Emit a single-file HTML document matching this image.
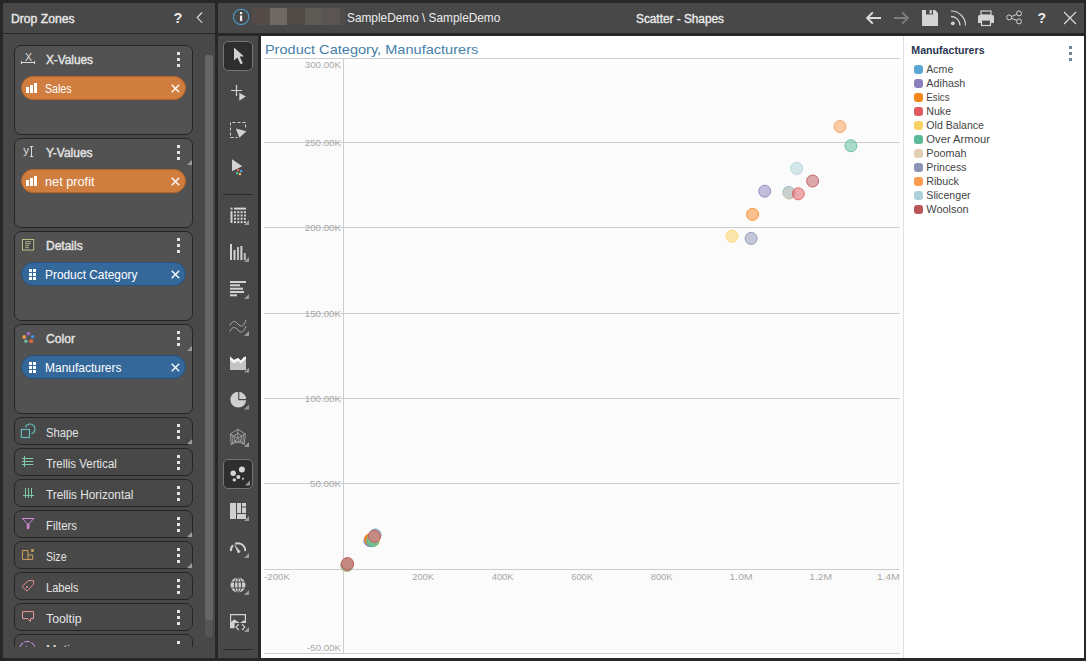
<!DOCTYPE html>
<html><head><meta charset="utf-8"><title>Scatter - Shapes</title>
<style>
*{box-sizing:border-box;margin:0;padding:0}
html,body{width:1086px;height:661px;overflow:hidden;background:#272727}
body{position:relative;font-family:"Liberation Sans","DejaVu Sans",sans-serif;font-size:13px;color:#e6e6e6}
.abs{position:absolute}
#lhead{left:3px;top:3px;width:212px;height:30px;background:#484848}
#lbody{left:3px;top:34px;width:212px;height:624px;background:#484848;overflow:hidden}
#lclip{left:0;top:0;width:200px;height:613px;overflow:hidden}
#mhead{left:218px;top:3px;width:866px;height:30px;background:#484848}
#tbar{left:218px;top:36px;width:40px;height:622px;background:#484848}
#chart{left:261px;top:36px;width:823px;height:622px;background:#fff}
.t{position:absolute;white-space:nowrap;line-height:16px;transform-origin:0 0;font-size:12px}
.zone{position:absolute;left:11px;width:179px;border:1px solid #252525;border-radius:7px;background:#484848}
.zone.open{background:#525252;height:90px}
.zone.closed{height:28px}
.zt{position:absolute;left:31px;top:6.5px;font-size:12px;color:#e4e4e4;white-space:nowrap;line-height:16px;transform-origin:0 0}
.open .zt{top:5.7px;-webkit-text-stroke:0.4px #e4e4e4}
.dots{position:absolute;left:162px;top:6px;width:3px;height:3px;background:#e4e4e4;box-shadow:0 6px 0 #e4e4e4,0 12px 0 #e4e4e4}
.pill{position:absolute;left:6px;top:30px;width:165px;height:24px;border-radius:12px;border:1px solid #b86427;background:#d07e40}
.pill.blue{background:#34689a;border-color:#27507a}
.pill .pt{position:absolute;left:22.7px;top:3.5px;font-size:12px;color:#fff;white-space:nowrap;line-height:16px;transform-origin:0 0}
.zi{position:absolute;left:4px;top:3px}
.ax{font-size:9.9px;fill:#a8a8a8}
.lg{font-size:10.5px;fill:#444}
.corner{position:absolute;right:0;top:21px;width:0;height:0;border-left:5px solid transparent;border-bottom:5px solid #9c9c9c}
</style></head><body>
<div id="lhead" class="abs">
  <div class="t" id="dz" style="left:7.5px;top:7.8px;-webkit-text-stroke:0.4px #e6e6e6;transform:scaleX(1.0127)">Drop Zones</div>
  <div class="t" style="left:170.5px;top:7.2px;font-weight:bold;font-size:14.5px;color:#ededed">?</div>
  <svg class="abs" style="left:193px;top:9.2px" width="8" height="12" viewBox="0 0 8 12"><path d="M6.1 0.5L1.2 5.6L6.1 10.7" fill="none" stroke="#e0e0e0" stroke-width="1.1"/></svg>
</div>
<div id="lbody" class="abs"><div id="lclip" class="abs">
<div class="zone open" style="top:11px"><svg class="zi" width="20" height="20" viewBox="0 0 20 20"><text x="9.5" y="12" font-size="10.5" text-anchor="middle" fill="#dcdcdc" font-family="Liberation Sans,sans-serif">X</text><path d="M2.5 13.5H15.5M2.5 12V15M15.5 12V15" stroke="#dcdcdc" stroke-width="1" fill="none"/></svg><div class="zt" style="transform:scaleX(0.9830)">X-Values</div><div class="dots"></div><div class="pill"><svg class="abs" style="left:4px;top:6px" width="11" height="10" viewBox="0 0 11 10"><path d="M0 4H3V10H0ZM4 2H7V10H4ZM8 0H11V10H8Z" fill="#fff"/></svg><div class="pt" style="transform:scaleX(0.8857)">Sales</div><svg class="abs" style="left:148.6px;top:6.7px" width="9" height="9" viewBox="0 0 9 9"><path d="M0.7 0.7L8.2 8.2M8.2 0.7L0.7 8.2" stroke="#fff" stroke-width="1.3" fill="none"/></svg></div></div>
<div class="zone open" style="top:104px"><svg class="zi" width="20" height="20" viewBox="0 0 20 20"><text x="7" y="11.6" font-size="11.5" text-anchor="middle" fill="#dcdcdc" font-family="Liberation Sans,sans-serif">y</text><path d="M12.5 4.5V14.5M11 4.5H14.2M11 14.5H14.2" stroke="#dcdcdc" stroke-width="1" fill="none"/></svg><div class="zt" style="transform:scaleX(0.9957)">Y-Values</div><div class="dots"></div><div class="pill"><svg class="abs" style="left:4px;top:6px" width="11" height="10" viewBox="0 0 11 10"><path d="M0 4H3V10H0ZM4 2H7V10H4ZM8 0H11V10H8Z" fill="#fff"/></svg><div class="pt" style="transform:scaleX(1.0599)">net profit</div><svg class="abs" style="left:148.6px;top:6.7px" width="9" height="9" viewBox="0 0 9 9"><path d="M0.7 0.7L8.2 8.2M8.2 0.7L0.7 8.2" stroke="#fff" stroke-width="1.3" fill="none"/></svg></div><div class="corner"></div></div>
<div class="zone open" style="top:197px"><svg class="zi" width="20" height="20" viewBox="0 0 20 20"><rect x="3.5" y="4.5" width="11.2" height="10.5" fill="#45454c" stroke="#bcc088" stroke-width="1"/><path d="M6 6.7H12M6 8.7H12M6 10.7H10M6 12.7H10" stroke="#bcc088" stroke-width="0.9"/></svg><div class="zt" style="transform:scaleX(1.0003)">Details</div><div class="dots"></div><div class="pill blue"><svg class="abs" style="left:6.7px;top:5.7px" width="7" height="11" viewBox="0 0 7 11"><path d="M0 0H3V3H0ZM4 0H7V3H4ZM0 4H3V7H0ZM4 4H7V7H4ZM0 8H3V11H0ZM4 8H7V11H4Z" fill="#fff"/></svg><div class="pt" style="transform:scaleX(0.9905)">Product Category</div><svg class="abs" style="left:148.6px;top:6.7px" width="9" height="9" viewBox="0 0 9 9"><path d="M0.7 0.7L8.2 8.2M8.2 0.7L0.7 8.2" stroke="#fff" stroke-width="1.3" fill="none"/></svg></div></div>
<div class="zone open" style="top:290px"><svg class="zi" width="20" height="20" viewBox="0 0 20 20"><circle cx="9.4" cy="5.6" r="1.8" fill="#a666c8"/><circle cx="5.2" cy="8.9" r="1.9" fill="#ee9a4a"/><circle cx="13.6" cy="8.8" r="1.8" fill="#4a88d4"/><circle cx="6.9" cy="13.2" r="1.8" fill="#78b89c"/><circle cx="12.2" cy="13.2" r="1.9" fill="#e86a3c"/></svg><div class="zt" style="transform:scaleX(1.0109)">Color</div><div class="dots"></div><div class="pill blue"><svg class="abs" style="left:6.7px;top:5.7px" width="7" height="11" viewBox="0 0 7 11"><path d="M0 0H3V3H0ZM4 0H7V3H4ZM0 4H3V7H0ZM4 4H7V7H4ZM0 8H3V11H0ZM4 8H7V11H4Z" fill="#fff"/></svg><div class="pt" style="transform:scaleX(0.9974)">Manufacturers</div><svg class="abs" style="left:148.6px;top:6.7px" width="9" height="9" viewBox="0 0 9 9"><path d="M0.7 0.7L8.2 8.2M8.2 0.7L0.7 8.2" stroke="#fff" stroke-width="1.3" fill="none"/></svg></div><div class="corner"></div></div>
<div class="zone closed" style="top:383px"><svg class="zi" width="20" height="20" viewBox="0 0 20 20"><rect x="2.4" y="8.5" width="8.1" height="8" fill="none" stroke="#62babd" stroke-width="1.2"/><path d="M6.3 6.4A5 5 0 1 1 12.5 12.8" fill="none" stroke="#62babd" stroke-width="1.2"/></svg><div class="zt" style="transform:scaleX(0.9336)">Shape</div><div class="dots"></div><div class="corner"></div></div>
<div class="zone closed" style="top:414px"><svg class="zi" width="20" height="20" viewBox="0 0 20 20"><path d="M3 6.5H14.3M3 9.5H14.3M3 12.5H14.3M5.5 4V15" stroke="#7fc8a8" stroke-width="1" fill="none"/></svg><div class="zt" style="transform:scaleX(0.9535)">Trellis Vertical</div><div class="dots"></div></div>
<div class="zone closed" style="top:445px"><svg class="zi" width="20" height="20" viewBox="0 0 20 20"><path d="M6.5 5V15M9.5 5V15M12.5 5V15M4 12.5H15" stroke="#7fc8a8" stroke-width="1" fill="none"/></svg><div class="zt" style="transform:scaleX(0.9829)">Trellis Horizontal</div><div class="dots"></div></div>
<div class="zone closed" style="top:476px"><svg class="zi" width="20" height="20" viewBox="0 0 20 20"><path d="M3.4 4.5H14.8L9.9 9.7V14.6H8.3V9.7Z" fill="none" stroke="#d88ad8" stroke-width="1"/><rect x="8.3" y="9.7" width="1.6" height="4.9" fill="#d88ad8"/></svg><div class="zt" style="transform:scaleX(0.9488)">Filters</div><div class="dots"></div><div class="corner"></div></div>
<div class="zone closed" style="top:507px"><svg class="zi" width="20" height="20" viewBox="0 0 20 20"><path d="M3.5 5.5H9V10H13.7V14.4H3.5Z M9 10V14.4" fill="none" stroke="#cda35c" stroke-width="1"/><rect x="12.6" y="4.6" width="1.8" height="1.8" fill="none" stroke="#cda35c" stroke-width="0.9"/></svg><div class="zt" style="transform:scaleX(0.8782)">Size</div><div class="dots"></div><div class="corner"></div></div>
<div class="zone closed" style="top:538px"><svg class="zi" width="20" height="20" viewBox="0 0 20 20"><path d="M3 10.5L9.4 4.6H14.6V8.2L8 15.2Z" fill="none" stroke="#e48e8e" stroke-width="1"/><circle cx="7.9" cy="10.9" r="1" fill="#e48e8e"/></svg><div class="zt" style="transform:scaleX(0.9187)">Labels</div><div class="dots"></div></div>
<div class="zone closed" style="top:569px"><svg class="zi" width="20" height="20" viewBox="0 0 20 20"><path d="M3.6 4.6H14.6V11.6H11.7L11.3 14.5L8.8 11.6H3.6Z" fill="none" stroke="#ec9c9c" stroke-width="1"/></svg><div class="zt" style="transform:scaleX(1.0234)">Tooltip</div><div class="dots"></div></div>
<div class="zone closed" style="top:600px"><svg class="zi" width="20" height="20" viewBox="0 0 20 20"><circle cx="8.4" cy="11.2" r="7.8" fill="none" stroke="#b48ad6" stroke-width="1.1" stroke-dasharray="5.5 1.6" stroke-dashoffset="2"/><circle cx="7.5" cy="8.4" r="0.7" fill="#b48ad6"/></svg><div class="zt" style="transform:scaleX(1.0546)">Motion</div><div class="dots"></div></div>

</div>
<div class="abs" style="left:202px;top:21px;width:8px;height:582px;background:#555;border-radius:2.5px"></div>
<div class="abs" style="left:202px;top:21px;width:8px;height:565px;background:#656565;border-radius:2.5px"></div>
</div>
<div id="mhead" class="abs">
<svg class="abs" style="left:0;top:0" width="866" height="30" viewBox="218 3 866 30">
  <circle cx="241.1" cy="16.9" r="7.7" fill="none" stroke="#4a9ccc" stroke-width="1.1"/>
  <rect x="240" y="15.5" width="2.2" height="5.5" fill="#ededed"/><rect x="240" y="12" width="2.2" height="2.2" fill="#ededed"/>
  <rect x="252" y="8" width="18" height="17" fill="#554c49"/>
  <rect x="270" y="8" width="17" height="17" fill="#6e6962"/>
  <rect x="287" y="8" width="18" height="17" fill="#514b48"/>
  <rect x="305" y="8" width="18" height="17" fill="#5d5a55"/>
  <rect x="323" y="8" width="17" height="17" fill="#5a5455"/>
  <rect x="340" y="8" width="5" height="17" fill="#4f4d4c"/>
  <!-- back -->
  <path d="M867 18H881M872.8 12.4L867.2 18L872.8 23.6" fill="none" stroke="#dcdcdc" stroke-width="2"/>
  <!-- fwd -->
  <path d="M894 18H908M902.2 12.4L907.8 18L902.2 23.6" fill="none" stroke="#7c7c7c" stroke-width="2"/>
  <!-- save -->
  <path d="M922 10H935L938 13V26H922Z" fill="#d4d4d4"/><rect x="926" y="10" width="7" height="4.5" fill="#484848"/><rect x="929.6" y="10" width="2.2" height="3.6" fill="#d4d4d4"/>
  <!-- rss -->
  <circle cx="952.8" cy="23.3" r="1.9" fill="#d4d4d4"/>
  <path d="M951 16.5A9 9 0 0 1 960 25.5" fill="none" stroke="#d4d4d4" stroke-width="1.3"/>
  <path d="M951 11A14.5 14.5 0 0 1 965.5 25.5" fill="none" stroke="#d4d4d4" stroke-width="1.1"/>
  <!-- print -->
  <rect x="981" y="11" width="10" height="4" fill="none" stroke="#d4d4d4" stroke-width="1.2"/>
  <path d="M978 16.5Q978 15 979.5 15H992.5Q994 15 994 16.5V23H978Z" fill="#d4d4d4"/>
  <rect x="981.5" y="20" width="9" height="5.5" fill="#484848" stroke="#d4d4d4" stroke-width="1.2"/>
  <!-- share -->
  <path d="M1009.2 17.4L1019 13.5M1009.2 17.4L1019 21.3" stroke="#d4d4d4" stroke-width="1"/>
  <circle cx="1009.2" cy="17.4" r="2.5" fill="#484848" stroke="#d4d4d4" stroke-width="1"/>
  <circle cx="1019" cy="13.4" r="2.5" fill="#484848" stroke="#d4d4d4" stroke-width="1"/>
  <circle cx="1019" cy="21.4" r="2.5" fill="#484848" stroke="#d4d4d4" stroke-width="1"/>
  <!-- close -->
  <path d="M1064 12L1076 24M1076 12L1064 24" stroke="#e0e0e0" stroke-width="1.1"/>
</svg>
<div class="t" id="crumb" style="left:128.6px;top:6.8px;color:#ececec;transform:scaleX(0.9864)">SampleDemo \ SampleDemo</div>
<div class="t" id="ttl" style="left:418px;top:7.7px;color:#ececec;-webkit-text-stroke:0.35px #ececec;transform:scaleX(0.9844)">Scatter - Shapes</div>
<div class="t" id="qm" style="left:819.5px;top:6.5px;font-size:14px;font-weight:bold;color:#ececec">?</div>

</div>
<div id="tbar" class="abs">
<svg class="abs" style="left:0;top:0" width="40" height="622" viewBox="218 36 40 622">
  <defs><path id="ct" d="M0 5L5 0V5Z" fill="#9a9a9a"/></defs>
  <rect x="223.5" y="41.5" width="29" height="29" rx="4.5" fill="#2e2e2e" stroke="#747474"/>
  <path d="M234 47.5V60.5L237.4 57.4L240.6 64.3L242.8 63.3L239.7 56.6H244Z" fill="#d2d2d2"/>
  <!-- plus arrow -->
  <path d="M231 90.5H242M236.5 85V96" stroke="#d2d2d2" stroke-width="1.2" fill="none"/>
  <path d="M239.3 92.8V100.8L245.8 96.4Z" fill="#d2d2d2"/>
  <!-- dashed select -->
  <path d="M237.5 137.5H230.5V122.5H245.5V129" fill="none" stroke="#d2d2d2" stroke-width="1" stroke-dasharray="3 2" stroke-dashoffset="1"/>
  <path d="M235.8 128.6L246.3 131.3L239.4 137.8Z" fill="#d2d2d2"/>
  <!-- arrow w/ dots -->
  <path d="M232 159.2V171.2L242.3 166.2Z" fill="#d2d2d2"/>
  <rect x="237" y="169" width="2.2" height="2.2" fill="#e8604a"/><rect x="240" y="170" width="2.2" height="2.2" fill="#4aa8e8"/>
  <rect x="236" y="172" width="2.2" height="2.2" fill="#3fc79a"/><rect x="238.8" y="173" width="2.2" height="2.2" fill="#f0b45a"/>
  <rect x="223" y="194" width="30" height="1" fill="#2b2b2b"/>
  <!-- grid -->
  <g fill="#d2d2d2"><rect x="230.5" y="207.6" width="2" height="2"/><rect x="234" y="207.6" width="12" height="2"/><rect x="230.5" y="211" width="2" height="12"/>
  <g id="gr"><rect x="234" y="211.2" width="2" height="2"/><rect x="237.3" y="211.2" width="2" height="2"/><rect x="240.6" y="211.2" width="2" height="2"/><rect x="243.9" y="211.2" width="2" height="2"/></g>
  <use href="#gr" y="3.3"/><use href="#gr" y="6.6"/><use href="#gr" y="9.9"/></g>
  <use href="#ct" x="244" y="220"/>
  <!-- columns -->
  <g fill="#d2d2d2"><rect x="230" y="244" width="2" height="16"/><rect x="233.5" y="250" width="2" height="10"/><rect x="237" y="247" width="2" height="13" fill="#bdbdbd"/><rect x="240.4" y="246" width="2" height="14"/><rect x="243.8" y="253" width="2" height="7" fill="#bdbdbd"/></g>
  <use href="#ct" x="244" y="257"/>
  <!-- bars -->
  <g fill="#d2d2d2"><rect x="230" y="281" width="16" height="2"/><rect x="230" y="284.3" width="10" height="2"/><rect x="230" y="287.7" width="13" height="2"/><rect x="230" y="291" width="14" height="2"/><rect x="230" y="294.3" width="7" height="2"/></g>
  <use href="#ct" x="244" y="294"/>
  <!-- lines -->
  <path d="M230 325.5C232 320.5 235 320.5 238 324S243.5 327 246 320M230 331.5C232 326.5 235 326.5 238 330S243.5 333 246 326" fill="none" stroke="#a8a8a8" stroke-width="1"/>
  <use href="#ct" x="244" y="331"/>
  <!-- area -->
  <path d="M230 356.5L234 360L238 358L241 360.5L243.5 357.5L246 356.5V370H230Z" fill="#c4c4c4"/>
  <path d="M230 356.5L234 360L238 358L241 360.5L243.5 357.5L246 356.5V359L243.5 361L241 363.5L238 361L234 363.5L230 360Z" fill="#f4f4f4"/>
  <use href="#ct" x="244" y="367.5"/>
  <!-- pie -->
  <circle cx="238.3" cy="399.7" r="7.9" fill="#cfcfcf"/><path d="M238.8 391V399.6H247" fill="none" stroke="#484848" stroke-width="1.1"/>
  <use href="#ct" x="244" y="404.5"/>
  <!-- radar -->
  <g fill="none" stroke="#a6a6a6" stroke-width="0.9"><path d="M237.8 429.3L245.3 434L244.3 444.4Q237.7 440 231.2 444.6L230.4 434Z"/><path d="M237.8 429.3V438.3M245.3 434L237.8 438.3L244.3 444.4M231.2 444.6L237.8 438.3L230.4 434"/><path d="M237.8 433L241.6 435.8L240.8 441.2L234.6 441.3L234 435.8Z"/><path d="M243.4 435L243 443M232.2 435L232.6 443.2" stroke-width="0.7"/></g>
  <use href="#ct" x="244" y="442"/>
  <!-- scatter selected -->
  <rect x="223.5" y="459.5" width="29" height="29" rx="4.5" fill="#2e2e2e" stroke="#747474"/>
  <g fill="#d6d6d6"><circle cx="241.9" cy="469.6" r="3"/><circle cx="233.2" cy="473.2" r="2.7"/><circle cx="238.3" cy="477" r="2"/><circle cx="234.3" cy="479.9" r="1.7"/><circle cx="243" cy="478.7" r="1"/></g>
  <use href="#ct" x="245" y="480.5"/>
  <!-- treemap -->
  <g fill="#cfcfcf"><rect x="230" y="503" width="6" height="16"/><rect x="237" y="503" width="4" height="10"/><rect x="242" y="503" width="4" height="3.5"/><rect x="242" y="507.5" width="4" height="5.5"/><rect x="237" y="514" width="9" height="5"/></g>
  <use href="#ct" x="244" y="516"/>
  <!-- gauge -->
  <path d="M230.85 551.2A7.2 7.2 0 1 1 245.15 551.2" fill="none" stroke="#cfcfcf" stroke-width="2" stroke-dasharray="6.6 2.6 100"/>
  <path d="M234 543.8L240.6 551.8L238 553.4Z" fill="#cfcfcf"/>
  <use href="#ct" x="244" y="553"/>
  <!-- globe -->
  <circle cx="238" cy="585" r="7.5" fill="#cfcfcf"/>
  <g stroke="#484848" stroke-width="1" fill="none"><path d="M230 582H246M230 588H246M238 577V593"/><ellipse cx="238" cy="585" rx="3.6" ry="7.5"/></g>
  <use href="#ct" x="244" y="590"/>
  <!-- image code -->
  <path d="M230.6 628V614.6H245.4V623" fill="none" stroke="#d2d2d2" stroke-width="1.2"/>
  <path d="M230 628.2V623L234.2 619.2L239.7 622.9L244 620.2L245 621V623H234.6V628.2Z" fill="#d2d2d2"/>
  <path d="M238.7 624.2L236.1 627.1L238.7 630M242.1 624.2L244.7 627.1L242.1 630" fill="none" stroke="#d2d2d2" stroke-width="1.2"/>
  <use href="#ct" x="244" y="627"/>
  <rect x="223" y="649" width="30" height="1" fill="#2b2b2b"/>
</svg>

</div>
<div id="chart" class="abs">
<svg class="abs" style="left:0;top:0" width="823" height="622" viewBox="261 36 823 622" font-family="Liberation Sans,DejaVu Sans,sans-serif">
<rect x="264" y="65" width="636" height="588" fill="#fbfbfb"/>
<rect x="264" y="58" width="636" height="1" fill="#cdcdcd"/>
<rect x="264" y="142" width="636" height="1" fill="#cdcdcd"/>
<rect x="264" y="227" width="636" height="1" fill="#cdcdcd"/>
<rect x="264" y="313" width="636" height="1" fill="#cdcdcd"/>
<rect x="264" y="398" width="636" height="1" fill="#cdcdcd"/>
<rect x="264" y="483" width="636" height="1" fill="#cdcdcd"/>
<rect x="264" y="569" width="636" height="1" fill="#cdcdcd"/>
<rect x="264" y="653" width="636" height="1" fill="#cdcdcd"/>
<rect x="343" y="59" width="1" height="594" fill="#cdcdcd"/>
<rect x="903" y="36" width="1" height="622" fill="#dedede"/>
<text id="ctitle" x="264.9" y="54" font-size="13.6" fill="#4580a8" textLength="213.4" lengthAdjust="spacingAndGlyphs">Product Category, Manufacturers</text>
<text class="ax" x="304.8" y="67.9" textLength="36.2" lengthAdjust="spacingAndGlyphs">300.00K</text>
<text class="ax" x="304.8" y="145.8" textLength="36.2" lengthAdjust="spacingAndGlyphs">250.00K</text>
<text class="ax" x="304.8" y="230.8" textLength="36.2" lengthAdjust="spacingAndGlyphs">200.00K</text>
<text class="ax" x="304.8" y="316.8" textLength="36.2" lengthAdjust="spacingAndGlyphs">150.00K</text>
<text class="ax" x="304.8" y="401.8" textLength="36.2" lengthAdjust="spacingAndGlyphs">100.00K</text>
<text class="ax" x="310" y="486.8" textLength="31" lengthAdjust="spacingAndGlyphs">50.00K</text>
<text class="ax" x="307" y="651" textLength="34" lengthAdjust="spacingAndGlyphs">-50.00K</text>
<text class="ax" x="264.1" y="579.8" textLength="25.8" lengthAdjust="spacingAndGlyphs">-200K</text>
<text class="ax" x="412.2" y="579.8" textLength="21.9" lengthAdjust="spacingAndGlyphs">200K</text>
<text class="ax" x="491.7" y="579.8" textLength="21.9" lengthAdjust="spacingAndGlyphs">400K</text>
<text class="ax" x="571.2" y="579.8" textLength="21.9" lengthAdjust="spacingAndGlyphs">600K</text>
<text class="ax" x="650.7" y="579.8" textLength="21.9" lengthAdjust="spacingAndGlyphs">800K</text>
<text class="ax" x="729.6" y="579.8" textLength="23.1" lengthAdjust="spacingAndGlyphs">1.0M</text>
<text class="ax" x="809.2" y="579.8" textLength="22.8" lengthAdjust="spacingAndGlyphs">1.2M</text>
<text class="ax" x="876.9" y="579.8" textLength="22.8" lengthAdjust="spacingAndGlyphs">1.4M</text>
<circle cx="346.7" cy="565.7" r="6" fill="#fbd164" fill-opacity="0.8" stroke="#fbd164" stroke-opacity="0.85" stroke-width="1"/>
<circle cx="347.0" cy="565.2" r="6" fill="#5ba7d3" fill-opacity="0.5" stroke="#5ba7d3" stroke-opacity="0.85" stroke-width="1"/>
<circle cx="347.3" cy="564.7" r="6" fill="#8b80bd" fill-opacity="0.4" stroke="#8b80bd" stroke-opacity="0.85" stroke-width="1"/>
<circle cx="347.4" cy="564.4" r="6" fill="#f5871f" fill-opacity="0.4" stroke="#f5871f" stroke-opacity="0.85" stroke-width="1"/>
<circle cx="347.4" cy="564.0" r="6" fill="#5bbb98" fill-opacity="0.4" stroke="#5bbb98" stroke-opacity="0.85" stroke-width="1"/>
<circle cx="347.5" cy="563.6" r="6" fill="#c38b82" stroke="#cb5c5d" stroke-width="1"/>
<circle cx="369.9" cy="540.7" r="6" fill="#8b80bd" fill-opacity="0.8" stroke="#8b80bd" stroke-opacity="0.85" stroke-width="1"/>
<circle cx="370.4" cy="540.2" r="6" fill="#5ba7d3" fill-opacity="0.8" stroke="#5ba7d3" stroke-opacity="0.85" stroke-width="1"/>
<circle cx="370.5" cy="539.4" r="6" fill="#f5871f" fill-opacity="0.95" stroke="#f5871f" stroke-opacity="0.85" stroke-width="1"/>
<circle cx="373.7" cy="540.3" r="6" fill="#fbd164" fill-opacity="0.9" stroke="#fbd164" stroke-opacity="0.85" stroke-width="1"/>
<circle cx="372.7" cy="540.7" r="6" fill="#5bbb98" fill-opacity="0.85" stroke="#5bbb98" stroke-opacity="0.85" stroke-width="1"/>
<circle cx="375.3" cy="534.7" r="6" fill="#abd1d9" fill-opacity="0.8" stroke="#abd1d9" stroke-opacity="0.85" stroke-width="1"/>
<circle cx="374.8" cy="535.4" r="6" fill="#8c94b3" fill-opacity="0.5" stroke="#8c94b3" stroke-opacity="0.85" stroke-width="1"/>
<circle cx="374.4" cy="536.4" r="6" fill="#c38b82" stroke="#cb5c5d" stroke-width="1"/>
<circle cx="732" cy="236.2" r="6" fill="#fbd164" fill-opacity="0.5" stroke="#fbd164" stroke-opacity="0.85" stroke-width="1"/>
<circle cx="751.1" cy="238.4" r="6" fill="#8c94b3" fill-opacity="0.5" stroke="#8c94b3" stroke-opacity="0.85" stroke-width="1"/>
<circle cx="752.6" cy="214.4" r="6" fill="#f5871f" fill-opacity="0.5" stroke="#f5871f" stroke-opacity="0.85" stroke-width="1"/>
<circle cx="764.7" cy="191.2" r="6" fill="#8b80bd" fill-opacity="0.5" stroke="#8b80bd" stroke-opacity="0.85" stroke-width="1"/>
<circle cx="788.9" cy="192.6" r="6" fill="#5ba7d3" fill-opacity="0.5" stroke="#5ba7d3" stroke-opacity="0.85" stroke-width="1"/>
<circle cx="789.4" cy="193.2" r="6" fill="#e3d0b4" fill-opacity="0.5" stroke="#e3d0b4" stroke-opacity="0.85" stroke-width="1"/>
<circle cx="798.3" cy="193.8" r="6" fill="#de5a5f" fill-opacity="0.5" stroke="#de5a5f" stroke-opacity="0.85" stroke-width="1"/>
<circle cx="812.6" cy="181" r="6" fill="#b9565a" fill-opacity="0.5" stroke="#b9565a" stroke-opacity="0.85" stroke-width="1"/>
<circle cx="796.7" cy="168.4" r="6" fill="#abd1d9" fill-opacity="0.5" stroke="#abd1d9" stroke-opacity="0.85" stroke-width="1"/>
<circle cx="850.9" cy="145.7" r="6" fill="#5bbb98" fill-opacity="0.5" stroke="#5bbb98" stroke-opacity="0.85" stroke-width="1"/>
<circle cx="840" cy="126.6" r="6" fill="#fb9b50" fill-opacity="0.5" stroke="#fb9b50" stroke-opacity="0.85" stroke-width="1"/>
<text id="ltitle" x="911.3" y="53.7" font-size="11" font-weight="bold" fill="#2a3550" textLength="73.3" lengthAdjust="spacingAndGlyphs">Manufacturers</text>
<g fill="#6f879b"><rect x="1069" y="46" width="3" height="3"/><rect x="1069" y="52" width="3" height="3"/><rect x="1069" y="58" width="3" height="3"/></g>
<rect x="914" y="65" width="9" height="9" rx="3" fill="#5ba7d3"/><text class="lg" x="926.3" y="73.2" textLength="27" lengthAdjust="spacingAndGlyphs">Acme</text>
<rect x="914" y="79" width="9" height="9" rx="3" fill="#8b80bd"/><text class="lg" x="926.3" y="87.2" textLength="39" lengthAdjust="spacingAndGlyphs">Adihash</text>
<rect x="914" y="93" width="9" height="9" rx="3" fill="#f5871f"/><text class="lg" x="926.3" y="101.2" textLength="23.3" lengthAdjust="spacingAndGlyphs">Esics</text>
<rect x="914" y="107" width="9" height="9" rx="3" fill="#de5a5f"/><text class="lg" x="926.3" y="115.2" textLength="24.8" lengthAdjust="spacingAndGlyphs">Nuke</text>
<rect x="914" y="121" width="9" height="9" rx="3" fill="#fbd164"/><text class="lg" x="926.3" y="129.2" textLength="57.7" lengthAdjust="spacingAndGlyphs">Old Balance</text>
<rect x="914" y="135" width="9" height="9" rx="3" fill="#5bbb98"/><text class="lg" x="926.3" y="143.2" textLength="63.6" lengthAdjust="spacingAndGlyphs">Over Armour</text>
<rect x="914" y="149" width="9" height="9" rx="3" fill="#e3d0b4"/><text class="lg" x="926.3" y="157.2" textLength="40.1" lengthAdjust="spacingAndGlyphs">Poomah</text>
<rect x="914" y="163" width="9" height="9" rx="3" fill="#8c94b3"/><text class="lg" x="926.3" y="171.2" textLength="40.1" lengthAdjust="spacingAndGlyphs">Princess</text>
<rect x="914" y="177" width="9" height="9" rx="3" fill="#fb9b50"/><text class="lg" x="926.3" y="185.2" textLength="32.6" lengthAdjust="spacingAndGlyphs">Ribuck</text>
<rect x="914" y="191" width="9" height="9" rx="3" fill="#abd1d9"/><text class="lg" x="926.3" y="199.2" textLength="44.3" lengthAdjust="spacingAndGlyphs">Slicenger</text>
<rect x="914" y="205" width="9" height="9" rx="3" fill="#b9565a"/><text class="lg" x="926.3" y="213.2" textLength="42.4" lengthAdjust="spacingAndGlyphs">Woolson</text>
</svg>

</div>
</body></html>
